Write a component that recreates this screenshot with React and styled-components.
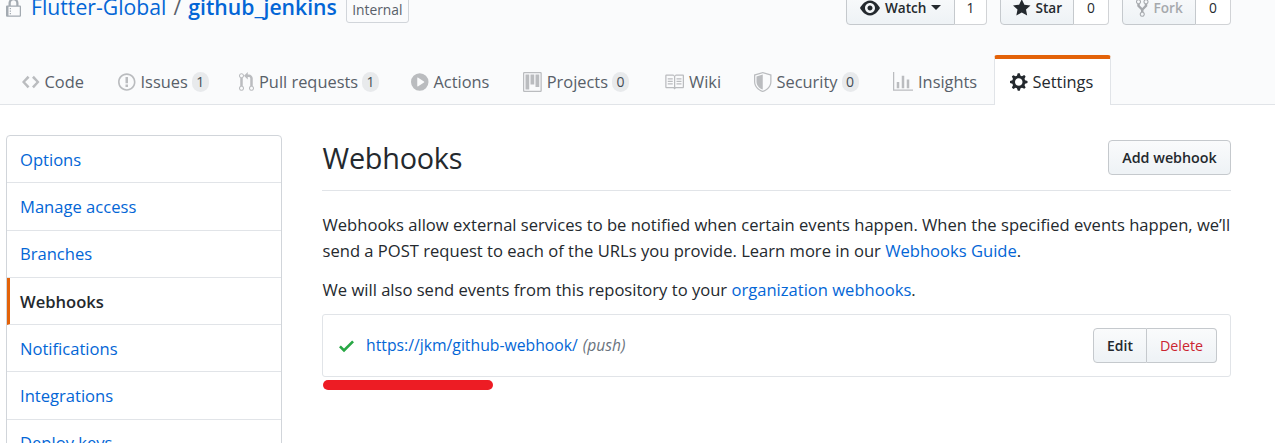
import React from 'react';
import styled, { createGlobalStyle } from 'styled-components';

const GlobalStyle = createGlobalStyle`
  *, *::before, *::after { box-sizing: border-box; }
  body {
    margin: 0;
    height: 443px;
    overflow: hidden;
    background: #fff;
    color: #24292e;
    font-family: "Open Sans", "Noto Sans", sans-serif;
    font-size: 16.58px;
    font-weight: 400;
    line-height: 26px;
  }
`;

const ICONS = {
  lock: [12, 'M4 13H3v-1h1v1zm8-6v7c0 .55-.45 1-1 1H1c-.55 0-1-.45-1-1V7c0-.55.45-1 1-1h1V4c0-2.2 1.8-4 4-4s4 1.8 4 4v2h1c.55 0 1 .45 1 1zM3.8 6h4.41V4c0-1.22-.98-2.2-2.2-2.2-1.22 0-2.2.98-2.2 2.2v2H3.8zM11 7H2v7h9V7zM4 8H3v1h1V8zm0 2H3v1h1v-1z'],
  code: [14, 'M9.5 3L8 4.5 11.5 8 8 11.5 9.5 13 14 8 9.5 3zm-5 0L0 8l4.5 5L6 11.5 2.5 8 6 4.5 4.5 3z'],
  issue: [14, 'M7 2.3c3.14 0 5.7 2.56 5.7 5.7s-2.56 5.7-5.7 5.7A5.71 5.71 0 0 1 1.3 8c0-3.14 2.56-5.7 5.7-5.7zM7 1C3.14 1 0 4.14 0 8s3.14 7 7 7 7-3.14 7-7-3.14-7-7-7zm1 3H6v5h2V4zm0 6H6v2h2v-2z'],
  pull: [12, 'M11 11.28V5c-.03-.78-.34-1.47-.94-2.06C9.46 2.35 8.78 2.03 8 2H7V0L4 3l3 3V4h1c.27.02.48.11.69.31.21.2.3.42.31.69v6.28A1.993 1.993 0 0 0 10 15a1.993 1.993 0 0 0 1-3.72zm-1 2.92c-.66 0-1.2-.55-1.2-1.2 0-.65.55-1.2 1.2-1.2.65 0 1.2.55 1.2 1.2 0 .65-.55 1.2-1.2 1.2zM4 3c0-1.11-.89-2-2-2a1.993 1.993 0 0 0-1 3.72v6.56A1.993 1.993 0 0 0 2 15a1.993 1.993 0 0 0 1-3.72V4.72c.59-.34 1-.98 1-1.72zm-.8 10c0 .66-.55 1.2-1.2 1.2-.65 0-1.2-.55-1.2-1.2 0-.65.55-1.2 1.2-1.2.65 0 1.2.55 1.2 1.2zM2 4.2C1.34 4.2.8 3.65.8 3c0-.65.55-1.2 1.2-1.2.65 0 1.2.55 1.2 1.2 0 .65-.55 1.2-1.2 1.2z'],
  play: [14, 'M14 8A7 7 0 1 1 0 8a7 7 0 0 1 14 0zm-8.223 3.482l4.599-3.066a.5.5 0 0 0 0-.832L5.777 4.518A.5.5 0 0 0 5 4.934v6.132a.5.5 0 0 0 .777.416z'],
  project: [15, 'M10 12h3V2h-3v10zm-4-2h3V2H6v8zm-4 4h3V2H2v12zm-1 1h13V1H1v14zM14 0H1a1 1 0 0 0-1 1v14a1 1 0 0 0 1 1h13a1 1 0 0 0 1-1V1a1 1 0 0 0-1-1z'],
  book: [16, 'M3 5h4v1H3V5zm0 3h4V7H3v1zm0 2h4V9H3v1zm11-5h-4v1h4V5zm0 2h-4v1h4V7zm0 2h-4v1h4V9zm2-6v9c0 .55-.45 1-1 1H9.5l-1 1-1-1H2c-.55 0-1-.45-1-1V3c0-.55.45-1 1-1h5.5l1 1 1-1H15c.55 0 1 .45 1 1zm-8 .5L7.5 3H2v9h6V3.5zm7-.5H9.5l-.5.5V12h6V3z'],
  shield: [14, 'M0 2l7-2 7 2v6.02C14 12.69 8.69 16 7 16c-1.69 0-7-3.31-7-7.98V2zm1 .75L7 1l6 1.75v5.268C13 12.104 8.449 15 7 15c-1.449 0-6-2.896-6-6.982V2.75zm1 .75L7 2v12c-1.207 0-5-2.482-5-5.985V3.5z'],
  graph: [16, 'M16 14v1H0V0h1v14h15zM5 13H3V8h2v5zm4 0H7V3h2v10zm4 0h-2V6h2v7z'],
  gear: [14, 'M14 8.77v-1.6l-1.94-.64-.45-1.09.88-1.84-1.13-1.13-1.81.91-1.09-.45-.69-1.92h-1.6l-.63 1.94-1.11.45-1.84-.88-1.13 1.13.91 1.81-.45 1.09L0 7.23v1.59l1.94.64.45 1.09-.88 1.84 1.13 1.13 1.81-.91 1.09.45.69 1.92h1.59l.63-1.94 1.11-.45 1.84.88 1.13-1.13-.92-1.81.47-1.09L14 8.75v.02zM7 11c-1.66 0-3-1.34-3-3s1.34-3 3-3 3 1.34 3 3-1.34 3-3 3z'],
  eye: [16, 'M8.06 2C3 2 0 8 0 8s3 6 8.06 6C13 14 16 8 16 8s-3-6-7.94-6zM8 12c-2.2 0-4-1.78-4-4 0-2.2 1.8-4 4-4 2.22 0 4 1.8 4 4 0 2.22-1.78 4-4 4zm2-4c0 1.11-.89 2-2 2-1.11 0-2-.89-2-2 0-1.11.89-2 2-2 1.11 0 2 .89 2 2z'],
  star: [14, 'M14 6l-4.9-.64L7 1 4.9 5.36 0 6l3.6 3.26L2.67 14 7 11.67 11.33 14l-.93-4.74L14 6z'],
  fork: [10, 'M8 1a1.993 1.993 0 0 0-1 3.72V6L5 8 3 6V4.72A1.993 1.993 0 0 0 2 1a1.993 1.993 0 0 0-1 3.72V6.5l3 3v1.78A1.993 1.993 0 0 0 5 15a1.993 1.993 0 0 0 1-3.72V9.5l3-3V4.72A1.993 1.993 0 0 0 8 1zM2 4.2C1.34 4.2.8 3.65.8 3c0-.65.55-1.2 1.2-1.2.65 0 1.2.55 1.2 1.2 0 .65-.55 1.2-1.2 1.2zm3 10c-.66 0-1.2-.55-1.2-1.2 0-.65.55-1.2 1.2-1.2.65 0 1.2.55 1.2 1.2 0 .65-.55 1.2-1.2 1.2zm3-10c-.66 0-1.2-.55-1.2-1.2 0-.65.55-1.2 1.2-1.2.65 0 1.2.55 1.2 1.2 0 .65-.55 1.2-1.2 1.2z'],
  check: [12, 'M12 5l-8 8-4-4 1.5-1.5L4 10l6.5-6.5L12 5z'],
};

const Svg = styled.svg`
  display: block;
  flex: none;
  fill: currentColor;
`;

function Octicon({ name, className }) {
  const [w, d] = ICONS[name];
  return (
    <Svg className={className} width={w * 1.25} height={20} viewBox={`0 0 ${w} 16`} aria-hidden="true">
      <path fillRule="evenodd" d={d} />
    </Svg>
  );
}

const Header = styled.header`
  display: flex;
  flex-direction: column;
  height: 105px;
  background: #fafbfc;
  border-bottom: 1px solid #e1e4e8;
`;

const TitleRow = styled.div`
  display: flex;
  flex: none;
  justify-content: space-between;
  height: 55px;
  padding: 0 44px 0 6px;
`;

const RepoName = styled.h1`
  display: flex;
  align-items: center;
  height: 32px;
  margin: -9px 0 0;
  font-size: 21.2px;
  font-weight: 400;
  white-space: nowrap;
`;

const LockIcon = styled(Octicon)`
  margin: 2px 10px 0 0;
  color: #a3aab1;
`;

const Link = styled.a`
  color: #0366d6;
  text-decoration: none;
`;

const RepoLink = styled(Link)`
  font-weight: ${(p) => (p.$strong ? 600 : 400)};
`;

const Slash = styled.span`
  width: 22px;
  color: #586069;
  text-align: center;
`;

const VisibilityLabel = styled.span`
  width: 63px;
  margin: 6px 0 0 9px;
  height: 26px;
  line-height: 23px;
  border: 1px solid #d1d5da;
  border-radius: 3px;
  color: #586069;
  font-size: 13.8px;
  text-align: center;
`;

const Actions = styled.div`
  display: flex;
  gap: 13px;
  margin-top: -10px;
`;

const CountButton = styled.div`
  display: flex;
  height: 35px;
  font-size: 13.8px;
  line-height: 33px;
`;

const ActionButton = styled.button`
  display: flex;
  align-items: center;
  gap: 5px;
  width: ${(p) => p.$width}px;
  padding: 0 0 0 ${(p) => p.$pad || 13}px;
  border: 1px solid #c5c9cd;
  border-radius: 4px 0 0 4px;
  background: linear-gradient(-180deg, #fafbfc, #eff3f6 90%);
  color: #24292e;
  font: 600 13.6px/33px "Open Sans", sans-serif;

  &:disabled {
    color: #a6a9ad;
  }
`;

const Caret = styled.span`
  width: 0;
  margin-left: -1px;
  border: 5px solid transparent;
  border-top-color: currentColor;
  border-bottom: 0;
`;

const SocialCount = styled.span`
  width: ${(p) => p.$width}px;
  border: 1px solid #d1d3d6;
  border-left: 0;
  border-radius: 0 4px 4px 0;
  background: #fff;
  font-weight: 500;
  text-align: center;
`;

const Tabs = styled.nav`
  display: flex;
  flex: none;
  height: 49px;
  padding-left: 5px;
`;

const Tab = styled.a`
  display: flex;
  align-items: center;
  flex: none;
  width: ${(p) => p.$width}px;
  height: 50px;
  padding: ${(p) => (p.$active ? '0 0 0 15px' : '4px 0 0 17px')};
  color: ${(p) => (p.$active ? '#24292e' : '#586069')};
  font-size: 16.4px;
  white-space: nowrap;

  ${(p) =>
    p.$active &&
    `
    border-color: #e36209 #e1e4e8 transparent;
    border-style: solid;
    border-width: 4px 1px 0;
    border-radius: 3px 3px 0 0;
    background: #fff;
  `}
`;

const TabIcon = styled(Octicon)`
  margin-right: 5px;
  color: ${(p) => (p.$active ? '#24292e' : '#babcbf')};
`;

const TabLabel = styled.span`
  min-width: ${(p) => p.$width}px;
`;

const Counter = styled.span`
  margin-left: 4px;
  padding: 0 4.5px;
  border-radius: 20px;
  background: #e8eaec;
  color: #444d56;
  font-size: 14px;
  font-weight: 500;
  line-height: 20px;
  text-align: center;
`;

const Page = styled.div`
  display: flex;
  align-items: flex-start;
  gap: 40px;
  height: 338px;
  padding: 30px 44px 0 6px;
  overflow: hidden;
`;

const Menu = styled.nav`
  flex: none;
  width: 276px;
  border: 1px solid #d1d5da;
  border-radius: 4px;
`;

const MenuItem = styled.a`
  display: block;
  height: 47.25px;
  padding: 10.8px 13px 0 ${(p) => (p.$selected ? 10 : 13)}px;
  border-bottom: 1px solid #e1e4e8;
  border-left: ${(p) => (p.$selected ? '3px solid #e36209' : '0')};
  color: ${(p) => (p.$selected ? '#24292e' : '#0366d6')};
  font-weight: ${(p) => (p.$selected ? 600 : 400)};
`;

const Content = styled.main`
  flex: 1;
  min-width: 0;
`;

const Subhead = styled.div`
  display: flex;
  justify-content: space-between;
  height: 56px;
  padding-top: 5px;
  border-bottom: 1px solid #e1e4e8;
`;

const Heading = styled.h2`
  margin: -1px 0 0 0.6px;
  font-size: 28.8px;
  font-weight: 400;
  line-height: 38px;
  letter-spacing: -0.25px;
`;

const Button = styled.button`
  width: ${(p) => p.$width}px;
  height: 35px;
  padding: 0;
  border: 1px solid #c5c9cd;
  border-radius: 4px;
  background: linear-gradient(-180deg, #fafbfc, #eff3f6 90%);
  color: ${(p) => (p.$danger ? '#cb2431' : '#24292e')};
  font: ${(p) => p.$weight || 600} ${(p) => p.$size || 14}px/33px "Open Sans", sans-serif;
`;

const ButtonGroup = styled.div`
  display: flex;

  ${Button}:first-child { border-radius: 4px 0 0 4px; }
  ${Button}:last-child { border-left: 0; border-radius: 0 4px 4px 0; }
`;

const Paragraph = styled.p`
  margin: ${(p) => p.$top}px 0 0 0.5px;
  white-space: nowrap;
`;

const HookRow = styled.div`
  display: flex;
  align-items: center;
  height: 63px;
  margin-top: 11px;
  padding: 0 13px 0 16px;
  border: 1px solid #e1e4e8;
  border-radius: 3px;
`;

const CheckIcon = styled(Octicon)`
  margin-right: 12px;
  color: #28a745;
`;

const HookUrl = styled(Link)`
  margin-top: -1px;
  font-size: 15.75px;
`;

const HookEvent = styled.em`
  flex: 1;
  margin: -1px 0 0 5px;
  color: #6a737d;
  font-size: 15.6px;
`;

const Underline = styled.div`
  width: 170px;
  height: 10px;
  margin: 3px 0 0 1px;
  border-radius: 5px;
  background: #ed1c24;
`;

const TABS = [
  { icon: 'code', label: 'Code', width: 96, text: 40 },
  { icon: 'issue', label: 'Issues', width: 121, text: 46, count: 1 },
  { icon: 'pull', label: 'Pull requests', width: 172, text: 98, count: 1 },
  { icon: 'play', label: 'Actions', width: 112, text: 57 },
  { icon: 'project', label: 'Projects', width: 141, text: 60, count: 0 },
  { icon: 'book', label: 'Wiki', width: 90, text: 32 },
  { icon: 'shield', label: 'Security', width: 139, text: 61, count: 0 },
  { icon: 'graph', label: 'Insights', width: 118, text: 59 },
  { icon: 'gear', label: 'Settings', width: 117, text: 62, active: true },
];

const MENU = ['Options', 'Manage access', 'Branches', 'Webhooks', 'Notifications', 'Integrations', 'Deploy keys'];

export default function App() {
  return (
    <>
      <GlobalStyle />
      <Header>
        <TitleRow>
          <RepoName>
            <LockIcon name="lock" />
            <RepoLink>Flutter-Global</RepoLink>
            <Slash>/</Slash>
            <RepoLink $strong>github_jenkins</RepoLink>
            <VisibilityLabel>Internal</VisibilityLabel>
          </RepoName>
          <Actions>
            <CountButton>
              <ActionButton $width={109}>
                <Octicon name="eye" />
                Watch
                <Caret />
              </ActionButton>
              <SocialCount $width={32}>1</SocialCount>
            </CountButton>
            <CountButton>
              <ActionButton $width={74} $pad={12}>
                <Octicon name="star" />
                Star
              </ActionButton>
              <SocialCount $width={35}>0</SocialCount>
            </CountButton>
            <CountButton>
              <ActionButton $width={74} disabled>
                <Octicon name="fork" />
                Fork
              </ActionButton>
              <SocialCount $width={35}>0</SocialCount>
            </CountButton>
          </Actions>
        </TitleRow>
        <Tabs>
          {TABS.map((t) => (
            <Tab key={t.label} $width={t.width} $active={t.active}>
              <TabIcon name={t.icon} $active={t.active} />
              <TabLabel $width={t.text}>{t.label}</TabLabel>
              {t.count !== undefined && <Counter>{t.count}</Counter>}
            </Tab>
          ))}
        </Tabs>
      </Header>
      <Page>
        <Menu>
          {MENU.map((label) => (
            <MenuItem key={label} $selected={label === 'Webhooks'}>
              {label}
            </MenuItem>
          ))}
        </Menu>
        <Content>
          <Subhead>
            <Heading>Webhooks</Heading>
            <Button $width={123} $size={14.3}>Add webhook</Button>
          </Subhead>
          <Paragraph $top={21}>
            Webhooks allow external services to be notified when certain events happen. When the specified events happen, we’ll
            <br />
            send a POST request to each of the URLs you provide. Learn more in our <Link>Webhooks Guide</Link>.
          </Paragraph>
          <Paragraph $top={13}>
            We will also send events from this repository to your <Link>organization webhooks</Link>.
          </Paragraph>
          <HookRow>
            <CheckIcon name="check" />
            <HookUrl>https://jkm/github-webhook/</HookUrl>
            <HookEvent>(push)</HookEvent>
            <ButtonGroup>
              <Button $width={54} $size={13.9}>Edit</Button>
              <Button $width={70} $size={14.3} $weight={500} $danger>Delete</Button>
            </ButtonGroup>
          </HookRow>
          <Underline />
        </Content>
      </Page>
    </>
  );
}
